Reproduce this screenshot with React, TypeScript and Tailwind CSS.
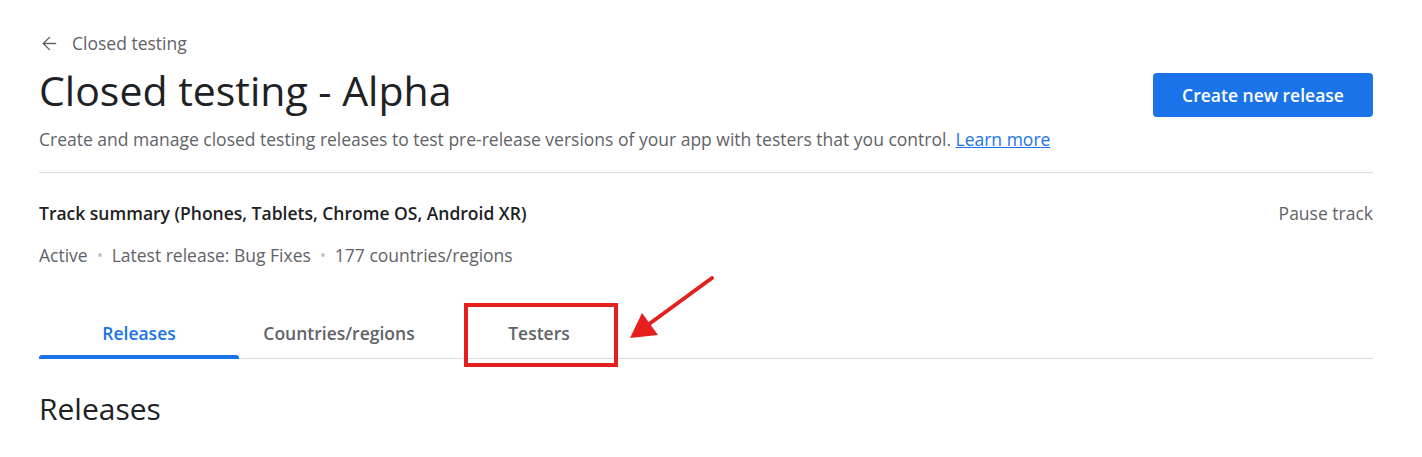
import { ArrowLeft } from "lucide-react";

const tabs = ["Releases", "Countries/regions", "Testers"];

export default function App() {
  return (
    <div
      className="relative min-h-[457px] bg-white pl-[39px] pr-[49px] text-[#202124]"
      style={{ fontFamily: "'Open Sans', Roboto, Arial, sans-serif" }}
    >
      {/* Breadcrumb */}
      <div className="flex items-center gap-[12px] pt-[31px] text-[17.5px] leading-6 text-[#5f6368]">
        <ArrowLeft className="h-[21px] w-[21px]" strokeWidth={1.6} />
        <span>Closed testing</span>
      </div>

      {/* Header */}
      <div className="mt-[8px] flex items-start justify-between">
        <h1 className="mt-[3px] text-[41px] leading-[48px] text-[#202124]">Closed testing - Alpha</h1>
        <button className="mt-[10px] h-[44px] w-[220px] rounded-[4px] bg-[#1a73e8] text-[17.5px] font-semibold text-white">
          Create new release
        </button>
      </div>
      <p className="mt-[10px] text-[17.5px] leading-6 text-[#5f6368]">
        Create and manage closed testing releases to test pre-release versions of your app with testers that you control.{" "}
        <a className="text-[#1a73e8] underline">Learn more</a>
      </p>

      <div className="mt-[21px] h-px bg-[#dadce0]" />

      {/* Track summary */}
      <div className="mt-[28px] flex items-center justify-between text-[17.5px] leading-6">
        <span className="font-semibold text-[#202124]">Track summary (Phones, Tablets, Chrome OS, Android XR)</span>
        <span className="text-[#5f6368]">Pause track</span>
      </div>
      <div className="mt-[18px] flex items-center gap-[10px] text-[17.5px] leading-6 text-[#5f6368]">
        <span>Active</span>
        <span className="h-[4px] w-[4px] rounded-full bg-[#c4c7c5]" />
        <span>Latest release: Bug Fixes</span>
        <span className="h-[4px] w-[4px] rounded-full bg-[#c4c7c5]" />
        <span>177 countries/regions</span>
      </div>

      {/* Tabs */}
      <div className="mt-[40px] flex border-b border-[#dadce0]">
        {tabs.map((t, i) => (
          <div
            key={t}
            className={`relative flex h-[51px] w-[200px] items-center justify-center pt-[2px] text-[17.5px] font-semibold ${
              i === 0 ? "text-[#1a73e8]" : "text-[#5f6368]"
            }`}
          >
            {t}
            {i === 0 && (
              <span className="absolute bottom-[-1px] left-0 right-0 h-[4px] rounded-t-[3px] bg-[#1a73e8]" />
            )}
            {i === 2 && (
              <span className="absolute left-[25px] top-[-4px] h-[64px] w-[154px] border-[4px] border-[#e51e1e]" />
            )}
          </div>
        ))}
      </div>

      <h2 className="mt-[32px] text-[30px] leading-9 text-[#202124]">Releases</h2>

      {/* Annotation arrow */}
      <svg className="absolute left-0 top-0 pointer-events-none" width="1422" height="457">
        <line x1="712" y1="278" x2="645" y2="327" stroke="#e51e1e" strokeWidth="4" strokeLinecap="round" />
        <polygon points="630,338 642,313 658,335" fill="#e51e1e" />
      </svg>
    </div>
  );
}
